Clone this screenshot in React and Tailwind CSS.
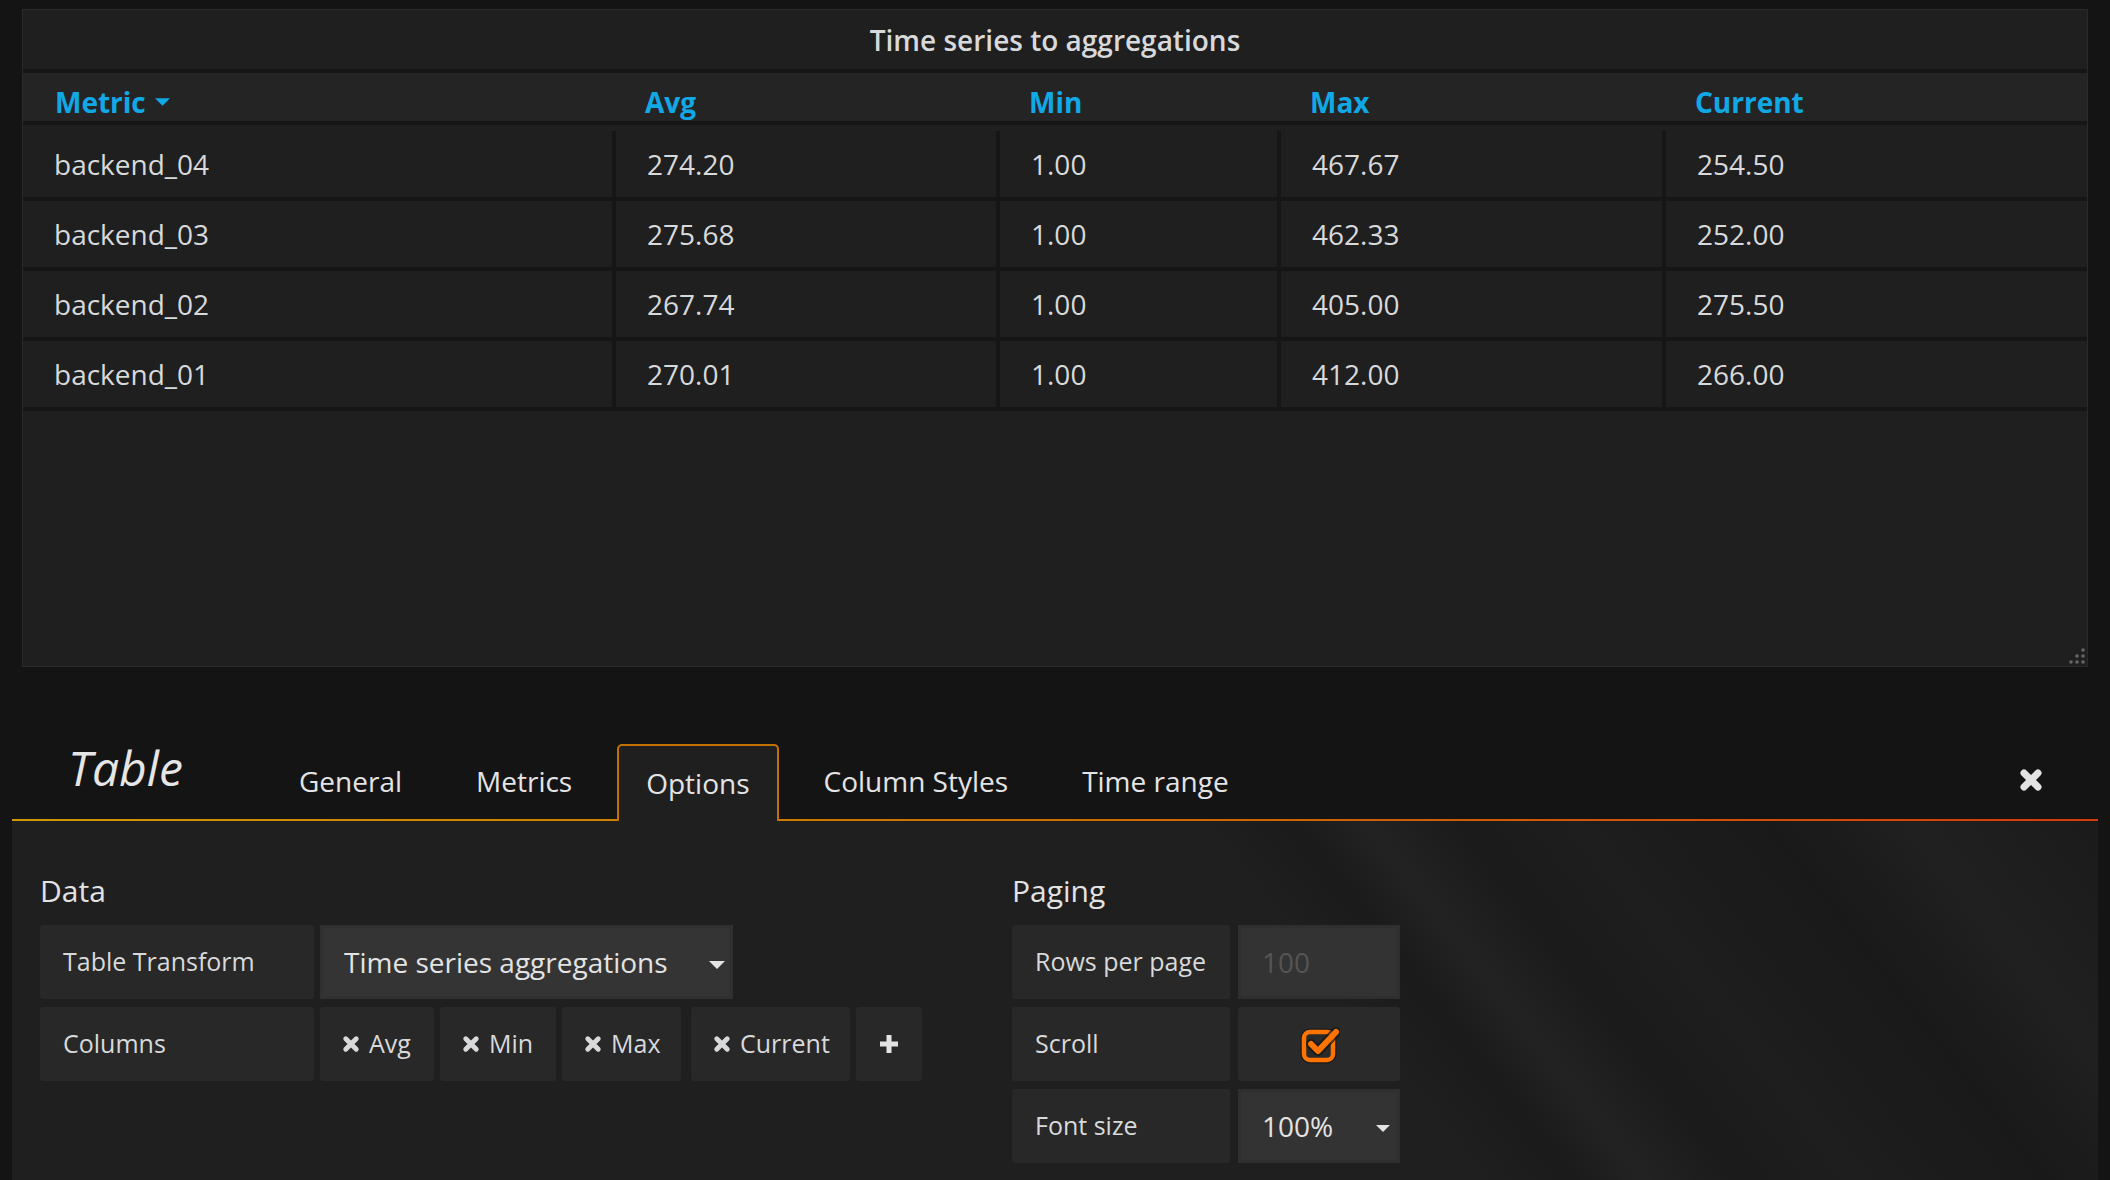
const rows = [
  ["backend_04", "274.20", "1.00", "467.67", "254.50"],
  ["backend_03", "275.68", "1.00", "462.33", "252.00"],
  ["backend_02", "267.74", "1.00", "405.00", "275.50"],
  ["backend_01", "270.01", "1.00", "412.00", "266.00"],
];

const headers = ["Metric", "Avg", "Min", "Max", "Current"];
const tabs = ["General", "Metrics", "Options", "Column Styles", "Time range"];
const columnTags = [
  { name: "Avg", w: "w-[114px]" },
  { name: "Min", w: "w-[116px]" },
  { name: "Max", w: "w-[119px]" },
  { name: "Current", w: "w-[159px] ml-[4px]" },
];

const grid = "grid grid-cols-[589px_380px_277px_381px_1fr] gap-x-[4px]";

function Caret({ className = "" }) {
  return (
    <svg viewBox="0 0 16 8" className={className} fill="currentColor">
      <path d="M0 0h16L8 8z" />
    </svg>
  );
}

function Cross({ className = "", width = 6 }) {
  return (
    <svg viewBox="0 0 24 24" className={className} fill="none" stroke="currentColor" strokeWidth={width} strokeLinecap="round">
      <path d="M5 5l14 14M19 5L5 19" />
    </svg>
  );
}

function Label({ className = "", children }) {
  return (
    <div className={`flex h-full items-center rounded-[3px] bg-[#282828] pl-[23px] text-[25px] text-[#d8d9da] ${className}`}>
      {children}
    </div>
  );
}

function TablePanel() {
  return (
    <div className="relative mx-[22px] mt-[9px] h-[658px] border border-[#2a2a2a] bg-[#1f1f20]">
      <div className="flex h-[59px] items-center justify-center text-[28px] font-semibold text-[#d8d9da]">
        Time series to aggregations
      </div>
      <div className="h-[4px] bg-[#161616]" />
      <div className={`${grid} h-[48px] bg-[#242425] pt-[10px] text-[28px] font-bold leading-[38px] text-[#10a9e6]`}>
        {headers.map((h, i) => (
          <div key={h} className={`flex items-center ${i === 0 ? "pl-[32px]" : "pl-[29px]"}`}>
            {h}
            {i === 0 && <Caret className="ml-[9px] h-[8px] w-[15px]" />}
          </div>
        ))}
      </div>
      <div className="h-[4px] bg-[#161616]" />
      <div className="h-[6px]" />
      {rows.map((r) => (
        <div key={r[0]}>
          <div className={`${grid} h-[66px] bg-[#161616]`}>
            {r.map((c, i) => (
              <div key={i} className="flex items-center bg-[#1f1f20] pl-[31px] text-[28px] text-[#d8d9da]">
                {c}
              </div>
            ))}
          </div>
          <div className="h-[4px] bg-[#161616]" />
        </div>
      ))}

      {/* resize handle */}
      <svg viewBox="0 0 18 18" className="absolute bottom-[1px] right-[1px] h-[18px] w-[18px] text-[#666]" fill="currentColor">
        <circle cx="15" cy="3" r="1.8" />
        <circle cx="15" cy="9" r="1.8" />
        <circle cx="9" cy="9" r="1.8" />
        <circle cx="15" cy="15" r="1.8" />
        <circle cx="9" cy="15" r="1.8" />
        <circle cx="3" cy="15" r="1.8" />
      </svg>
    </div>
  );
}

function Editor() {
  return (
    <div className="mx-[12px] mt-[52px] flex h-[461px] flex-col">
      <div className="flex h-[100px] items-end">
        <div className="mb-[21px] w-[258px] pl-[56px] text-[48px] italic leading-[60px] text-[#e6e6e6]">Table</div>
        <ul className="flex items-end gap-[16px]">
          {tabs.map((t) =>
            t === "Options" ? (
              <li
                key={t}
                className="relative z-10 -mb-[2px] rounded-t-[5px] border-2 border-b-0 border-[#c27000] bg-[#1f1f20] px-[27px] pb-[17px] pt-[16px] text-[28px] leading-[42px] text-[#e4e4e4]"
              >
                {t}
              </li>
            ) : (
              <li
                key={t}
                className="border-2 border-transparent px-[27px] pb-[15px] pt-[16px] text-[28px] leading-[42px] text-[#e4e4e4]"
              >
                {t}
              </li>
            )
          )}
        </ul>
        <button className="mb-[27px] ml-auto mr-[55px] text-[#e4e4e4]">
          <Cross className="h-[24px] w-[24px]" width={7} />
        </button>
      </div>
      <div className="h-[2px] bg-gradient-to-r from-[#d09800] via-[#cc6e00] to-[#d43a0a]" />

      <div className="flex flex-1 bg-[linear-gradient(52deg,#1f1f20_0%,#1f1f20_62%,#1b1b1b_66%,#222222_69%,#1b1b1b_73%,#1e1e1e_78%,#191919_86%,#202020_92%,#1b1b1b_100%)] pl-[28px] pt-[50px]">
        {/* Data */}
        <section className="w-[972px]">
          <h5 className="mb-[14px] text-[30px] leading-[40px] text-[#e3e3e3]">Data</h5>
          <div className="flex flex-col gap-[8px]">
            <div className="flex h-[74px] gap-[6px]">
              <Label className="w-[274px]">Table Transform</Label>
              <div className="flex w-[413px] items-center justify-between border-[3px] border-[#303030] bg-[#343434] pl-[21px] pr-[5px] text-[28px] text-[#e3e3e3]">
                Time series aggregations
                <Caret className="mt-[6px] h-[8px] w-[16px]" />
              </div>
            </div>
            <div className="flex h-[74px] gap-[6px]">
              <Label className="w-[274px]">Columns</Label>
              {columnTags.map((c) => (
                <div key={c.name} className={`flex h-full items-center gap-[9px] rounded-[3px] bg-[#282828] pl-[22px] text-[25px] text-[#d8d9da] ${c.w}`}>
                  <Cross className="h-[18px] w-[18px]" width={6.5} />
                  {c.name}
                </div>
              ))}
              <div className="flex h-full w-[66px] items-center justify-center rounded-[3px] bg-[#282828] text-[#e3e3e3]">
                <svg viewBox="0 0 20 20" className="h-[20px] w-[20px]" fill="none" stroke="currentColor" strokeWidth="5">
                  <path d="M10 1v18M1 10h18" />
                </svg>
              </div>
            </div>
          </div>
        </section>

        {/* Paging */}
        <section>
          <h5 className="mb-[14px] text-[30px] leading-[40px] text-[#e3e3e3]">Paging</h5>
          <div className="flex flex-col gap-[8px]">
            <div className="flex h-[74px] gap-[8px]">
              <Label className="w-[218px]">Rows per page</Label>
              <div className="flex w-[162px] items-center border-[3px] border-[#2f2f2f] bg-[#333333] pl-[21px] text-[28px] text-[#555]">
                100
              </div>
            </div>
            <div className="flex h-[74px] gap-[8px]">
              <Label className="w-[218px]">Scroll</Label>
              <div className="flex w-[162px] items-center justify-center rounded-[3px] bg-[#2a2a2a]">
                <svg viewBox="0 0 40 40" className="ml-[2px] h-[40px] w-[40px]" fill="none" strokeLinecap="round" strokeLinejoin="round">
                  <rect x="4" y="8" width="29" height="28" rx="6" stroke="#111" strokeWidth="7" opacity="0.6" />
                  <rect x="4" y="8" width="29" height="28" rx="6" stroke="#ff7400" strokeWidth="4.5" fill="#2a2a2a" />
                  <path d="M11 20l7 7L36 8" stroke="#151515" strokeWidth="10" opacity="0.7" />
                  <path d="M11 20l7 7L36 8" stroke="#ff7400" strokeWidth="6" />
                </svg>
              </div>
            </div>
            <div className="flex h-[74px] gap-[8px]">
              <Label className="w-[218px]">Font size</Label>
              <div className="flex w-[162px] items-center justify-between border-[3px] border-[#2f2f2f] bg-[#333333] pl-[21px] pr-[7px] text-[28px] text-[#e3e3e3]">
                100%
                <Caret className="mt-[4px] h-[7px] w-[14px]" />
              </div>
            </div>
          </div>
        </section>
      </div>
    </div>
  );
}

export default function App() {
  return (
    <div className="h-[1180px] w-full overflow-hidden bg-[#141414] font-['Open_Sans','Liberation_Sans',sans-serif] text-[#d8d9da]">
      <TablePanel />
      <Editor />
    </div>
  );
}
